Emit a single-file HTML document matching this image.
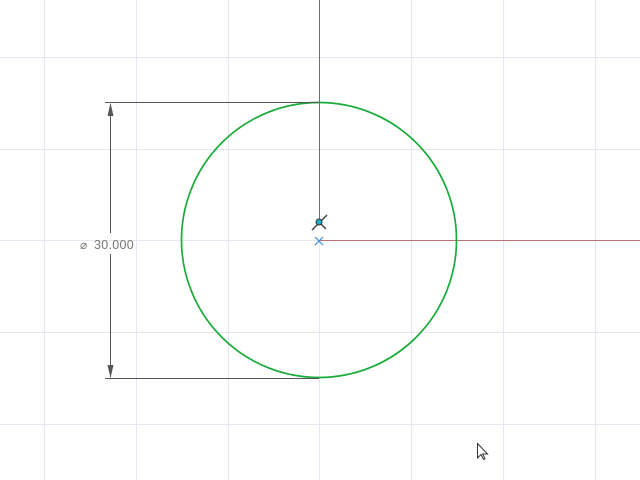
<!DOCTYPE html>
<html><head><style>html,body{margin:0;padding:0;background:#fff;width:640px;height:480px;overflow:hidden}</style></head>
<body>
<svg width="640" height="480" xmlns="http://www.w3.org/2000/svg" style="display:block">
<g stroke="#e6e6f2" stroke-width="1">
<line x1="44.5" y1="0" x2="44.5" y2="480"/><line x1="136.5" y1="0" x2="136.5" y2="480"/>
<line x1="228.5" y1="0" x2="228.5" y2="480"/><line x1="411.5" y1="0" x2="411.5" y2="480"/>
<line x1="503.5" y1="0" x2="503.5" y2="480"/><line x1="595.5" y1="0" x2="595.5" y2="480"/>
<line x1="0" y1="57.5" x2="640" y2="57.5"/><line x1="0" y1="149.5" x2="640" y2="149.5"/>
<line x1="0" y1="240.5" x2="640" y2="240.5"/><line x1="0" y1="332.5" x2="640" y2="332.5"/>
<line x1="0" y1="424.5" x2="640" y2="424.5"/><line x1="319.5" y1="240" x2="319.5" y2="480"/>
</g>
<line x1="319.5" y1="0" x2="319.5" y2="222" stroke="#707070" stroke-width="1"/>
<line x1="320" y1="240.5" x2="640" y2="240.5" stroke="#c07070" stroke-width="1"/>
<circle cx="319" cy="240" r="137.5" fill="none" stroke="#1aab3a" stroke-width="1.7"/>
<g stroke="#555" stroke-width="1">
<line x1="105" y1="102.5" x2="319" y2="102.5"/><line x1="105" y1="378.5" x2="319" y2="378.5"/>
<line x1="110.5" y1="104" x2="110.5" y2="233"/><line x1="110.5" y1="254" x2="110.5" y2="377"/>
</g>
<polygon points="110.5,103 107.5,116 113.5,116" fill="#555"/>
<polygon points="110.5,378 107.5,365 113.5,365" fill="#555"/>
<text x="80" y="249" font-family="Liberation Sans, sans-serif" font-size="12" fill="#777">⌀</text>
<text x="94" y="249" font-family="Liberation Sans, sans-serif" font-size="12.5" fill="#777" letter-spacing="0.3">30.000</text>
<line x1="312" y1="230" x2="327" y2="215" stroke="#444" stroke-width="1.5"/>
<line x1="319" y1="222" x2="326" y2="229" stroke="#444" stroke-width="1.5"/>
<circle cx="319" cy="222" r="3" fill="#1ab0d0" stroke="#333" stroke-width="1"/>
<g stroke="#3a8ee8" stroke-width="1.2"><line x1="315" y1="237" x2="323" y2="245"/><line x1="323" y1="237" x2="315" y2="245"/></g>
<path d="M477.5 443.5 L477.5 458 L481 454.5 L483.5 459.5 L485 458.8 L482.7 454 L487.5 454 Z" fill="#fff" stroke="#333" stroke-width="1"/>
</svg>
</body></html>
